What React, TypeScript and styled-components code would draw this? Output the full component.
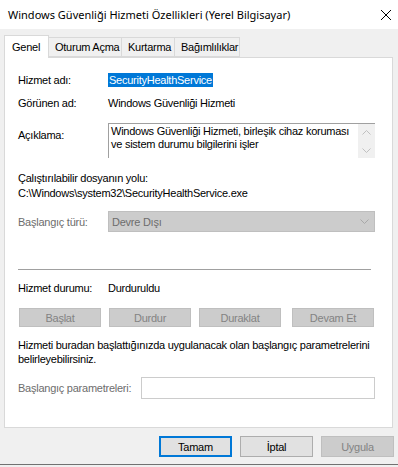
import React from "react";
import styled, { createGlobalStyle } from "styled-components";

const Global = createGlobalStyle`
  html, body { margin: 0; padding: 0; background: #f0f0f0; }
  body {
    font-family: "Liberation Sans", Arial, sans-serif;
    font-size: 11px;
    letter-spacing: -0.25px;
    color: #000;
  }
  * { box-sizing: border-box; }
  #root { width: 398px; height: 467px; overflow: hidden; }
`;

const Window = styled.div`
  width: 398px;
  height: 465px;
  display: flex;
  flex-direction: column;
  background: #f0f0f0;
  border-bottom: 1px solid #717171;
`;

const TitleBar = styled.div`
  height: 29px;
  flex: none;
  background: #fff;
  display: flex;
  align-items: center;
  justify-content: space-between;
  padding: 0 7px 0 8px;
`;

const Title = styled.span`
  font-family: "Noto Sans", "Open Sans", sans-serif;
  font-size: 11px;
  letter-spacing: 0;
  line-height: 16px;
  margin-top: 1px;
`;

const CloseBox = styled.div`
  width: 10px;
  height: 10px;
  display: flex;
`;

const TabStrip = styled.div`
  display: flex;
  align-items: flex-end;
  height: 22px;
  margin-top: 6px;
  padding-left: 4px;
  position: relative;
  z-index: 1;
`;

const Tab = styled.div<{ $w: number; $active?: boolean }>`
  width: ${(p) => p.$w}px;
  height: ${(p) => (p.$active ? 23 : 20)}px;
  margin-bottom: ${(p) => (p.$active ? -1 : 0)}px;
  margin-left: -1px;
  &:first-child { margin-left: 0; }
  border: 1px solid #d9d9d9;
  border-bottom: ${(p) => (p.$active ? "none" : "1px solid #d9d9d9")};
  background: ${(p) => (p.$active ? "#fff" : "#f0f0f0")};
  display: flex;
  align-items: center;
  padding-left: ${(p) => (p.$active ? 7 : 6)}px;
  padding-bottom: ${(p) => (p.$active ? 1 : 0)}px;
  white-space: nowrap;
  position: relative;
  z-index: ${(p) => (p.$active ? 2 : 1)};
`;

const Panel = styled.div`
  margin: 0 5px 0 4px;
  height: 371px;
  background: #fff;
  border: 1px solid #d9d9d9;
  padding: 15px 17px 0 13px;
  display: flex;
  flex-direction: column;
`;

const Row = styled.div<{ $top: number; $h?: number; $align?: string }>`
  display: flex;
  align-items: ${(p) => p.$align || "center"};
  margin-top: ${(p) => p.$top}px;
  min-height: ${(p) => p.$h || 14}px;
  line-height: 14px;
  white-space: nowrap;
`;

const Label = styled.span<{ $w?: number; $disabled?: boolean; $pt?: number }>`
  width: ${(p) => p.$w || 90}px;
  flex: none;
  color: ${(p) => (p.$disabled ? "#6d6d6d" : "#000")};
  padding-top: ${(p) => p.$pt || 0}px;
`;

const Selected = styled.span`
  background: #0078d7;
  color: #fff;
  padding: 0 1px;
  line-height: 14px;
`;

const DescBox = styled.div`
  width: 267px;
  height: 35px;
  border-top: 1px solid #a0a0a0;
  border-left: 1px solid #a0a0a0;
  display: flex;
  background: #fff;
`;

const DescText = styled.div`
  flex: 1;
  padding: 1px 0 0 2px;
  line-height: 13px;
  white-space: nowrap;
`;

const ScrollBar = styled.div`
  width: 17px;
  background: #f0f0f0;
  display: flex;
  flex-direction: column;
  align-items: center;
  justify-content: space-between;
  padding: 6px 0 5px;
`;

const SelectBox = styled.div`
  width: 267px;
  height: 21px;
  background: #cccccc;
  border: 1px solid #bfbfbf;
  display: flex;
  align-items: center;
  justify-content: space-between;
  padding: 0 5px 0 3px;
  color: #6d6d6d;
`;

const Separator = styled.div<{ $top: number }>`
  height: 1px;
  margin-top: ${(p) => p.$top}px;
  width: 353px;
  background: #a0a0a0;
`;

const ButtonRow = styled.div<{ $top: number }>`
  display: flex;
  gap: 8px;
  margin-top: ${(p) => p.$top}px;
  padding-left: 1px;
`;

const SmallButton = styled.div<{ $extra?: number }>`
  width: 82px;
  height: 19px;
  background: #cccccc;
  border: 1px solid #bfbfbf;
  color: #838383;
  display: flex;
  align-items: center;
  justify-content: center;
  margin-left: ${(p) => p.$extra || 0}px;
`;

const Para = styled.div<{ $top: number }>`
  margin-top: ${(p) => p.$top}px;
  line-height: 14px;
  white-space: nowrap;
`;

const InputBox = styled.div`
  width: 234px;
  height: 22px;
  border: 1px solid #cccccc;
  background: #fff;
`;

const Footer = styled.div`
  display: flex;
  justify-content: flex-end;
  gap: 8px;
  margin-top: 8px;
  padding-right: 4px;
`;

const DlgButton = styled.div<{ $variant?: "default" | "normal" | "disabled" }>`
  width: 73px;
  height: 21px;
  display: flex;
  align-items: center;
  justify-content: center;
  background: ${(p) => (p.$variant === "disabled" ? "#cccccc" : "#e1e1e1")};
  border: ${(p) =>
    p.$variant === "default"
      ? "2px solid #0078d7"
      : p.$variant === "disabled"
      ? "1px solid #bfbfbf"
      : "1px solid #adadad"};
  color: ${(p) => (p.$variant === "disabled" ? "#838383" : "#000")};
`;

const Chevron = ({ dir, color }: { dir: "up" | "down"; color: string }) => (
  <svg width="9" height="5" viewBox="0 0 9 5">
    <polyline
      points={dir === "up" ? "0.5,4.5 4.5,0.5 8.5,4.5" : "0.5,0.5 4.5,4.5 8.5,0.5"}
      fill="none"
      stroke={color}
      strokeWidth="1"
    />
  </svg>
);

export default function App() {
  return (
    <>
      <Global />
      <Window>
        <TitleBar>
          <Title>Windows Güvenliği Hizmeti Özellikleri (Yerel Bilgisayar)</Title>
          <CloseBox>
            <svg width="10" height="10" viewBox="0 0 10 10">
              <path d="M0 0 L10 10 M10 0 L0 10" stroke="#000" strokeWidth="1" />
            </svg>
          </CloseBox>
        </TitleBar>
        <TabStrip>
          <Tab $w={45} $active>Genel</Tab>
          <Tab $w={74}>Oturum Açma</Tab>
          <Tab $w={54}>Kurtarma</Tab>
          <Tab $w={66}>Bağımlılıklar</Tab>
        </TabStrip>
        <Panel>
          <Row $top={0}>
            <Label>Hizmet adı:</Label>
            <Selected>SecurityHealthService</Selected>
          </Row>
          <Row $top={9}>
            <Label>Görünen ad:</Label>
            <span>Windows Güvenliği Hizmeti</span>
          </Row>
          <Row $top={13} $align="flex-start">
            <Label $pt={5}>Açıklama:</Label>
            <DescBox>
              <DescText>
                Windows Güvenliği Hizmeti, birleşik cihaz koruması
                <br />
                ve sistem durumu bilgilerini işler
              </DescText>
              <ScrollBar>
                <Chevron dir="up" color="#c0c0c0" />
                <Chevron dir="down" color="#c0c0c0" />
              </ScrollBar>
            </DescBox>
          </Row>
          <Row $top={13}>
            <span>Çalıştırılabilir dosyanın yolu:</span>
          </Row>
          <Row $top={1}>
            <span>C:\Windows\system32\SecurityHealthService.exe</span>
          </Row>
          <Row $top={11} $h={21}>
            <Label $disabled>Başlangıç türü:</Label>
            <SelectBox>
              <span>Devre Dışı</span>
              <Chevron dir="down" color="#a8a8a8" />
            </SelectBox>
          </Row>
          <Separator $top={37} />
          <Row $top={11}>
            <Label>Hizmet durumu:</Label>
            <span>Durduruldu</span>
          </Row>
          <ButtonRow $top={13}>
            <SmallButton>Başlat</SmallButton>
            <SmallButton>Durdur</SmallButton>
            <SmallButton>Duraklat</SmallButton>
            <SmallButton $extra={3}>Devam Et</SmallButton>
          </ButtonRow>
          <Para $top={11}>
            Hizmeti buradan başlattığınızda uygulanacak olan başlangıç parametrelerini
            <br />
            belirleyebilirsiniz.
          </Para>
          <Row $top={11} $h={22}>
            <Label $w={123} $disabled>Başlangıç parametreleri:</Label>
            <InputBox />
          </Row>
        </Panel>
        <Footer>
          <DlgButton $variant="default">Tamam</DlgButton>
          <DlgButton>İptal</DlgButton>
          <DlgButton $variant="disabled">Uygula</DlgButton>
        </Footer>
      </Window>
    </>
  );
}
